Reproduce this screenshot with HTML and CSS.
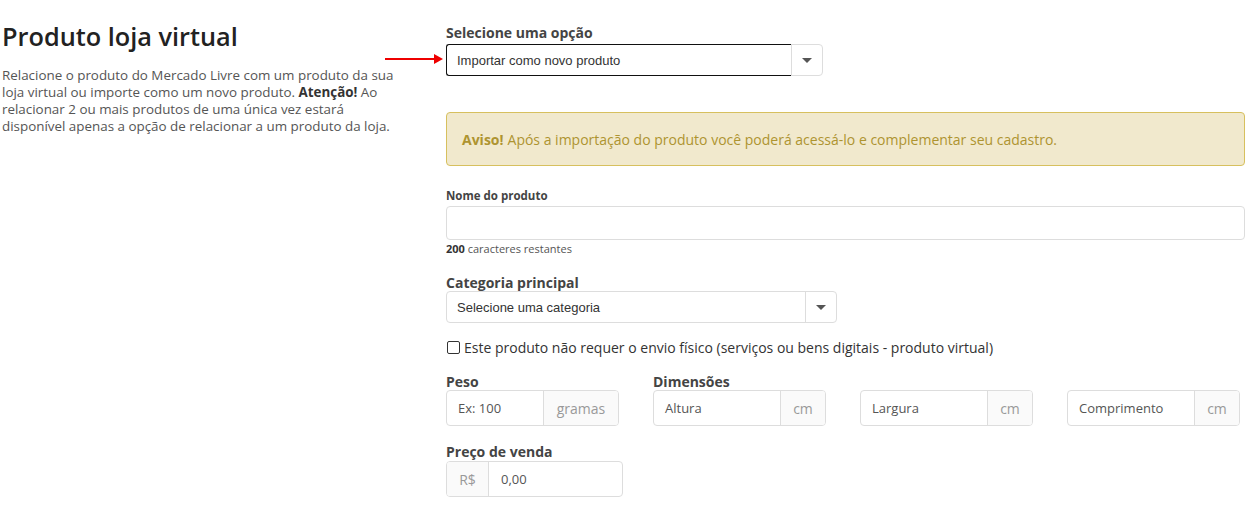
FILE: index.html
```html
<!DOCTYPE html>
<html lang="pt-BR">
<head>
  <meta charset="UTF-8" />
  <title>Produto loja virtual</title>
  <link rel="stylesheet" href="styles.css">
</head>
<body>
  <div class="page">
    <div class="intro">
      <h1>Produto loja virtual</h1>
      <p>Relacione o produto do Mercado Livre com um produto da sua loja virtual ou importe como um novo produto. <b>Atenção!</b> Ao relacionar 2 ou mais produtos de uma única vez estará disponível apenas a opção de relacionar a um produto da loja.</p>
    </div>

    <div class="form">
      <div class="field">
        <label class="lbl">Selecione uma opção</label>
        <div class="select select-main focused">
          <span class="arrow-pointer"></span>
          <div class="select-value">Importar como novo produto</div>
          <div class="select-btn"><span class="caret"></span></div>
        </div>
      </div>

      <div class="alert"><b>Aviso!</b> Após a importação do produto você poderá acessá-lo e complementar seu cadastro.</div>

      <div class="field">
        <label class="lbl small">Nome do produto</label>
        <div class="input full"></div>
        <div class="help"><b>200</b> caracteres restantes</div>
      </div>

      <div class="field cat">
        <label class="lbl">Categoria principal</label>
        <div class="select select-cat">
          <div class="select-value">Selecione uma categoria</div>
          <div class="select-btn"><span class="caret"></span></div>
        </div>
      </div>

      <label class="check"><span class="box"></span>Este produto não requer o envio físico (serviços ou bens digitais - produto virtual)</label>

      <div class="dims">
        <div class="col">
          <label class="lbl">Peso</label>
          <div class="group"><span class="ph">Ex: 100</span><span class="addon">gramas</span></div>
        </div>
        <div class="col">
          <label class="lbl">Dimensões</label>
          <div class="group"><span class="ph">Altura</span><span class="addon">cm</span></div>
        </div>
        <div class="col">
          <label class="lbl">&nbsp;</label>
          <div class="group"><span class="ph">Largura</span><span class="addon">cm</span></div>
        </div>
        <div class="col">
          <label class="lbl">&nbsp;</label>
          <div class="group"><span class="ph">Comprimento</span><span class="addon">cm</span></div>
        </div>
      </div>

      <div class="field price">
        <label class="lbl">Preço de venda</label>
        <div class="group price-group"><span class="addon left">R$</span><span class="ph">0,00</span></div>
      </div>
    </div>
  </div>
</body>
</html>
```

FILE: styles.css
```css
body {
  margin: 0;
  font-family: "Open Sans", Arial, sans-serif;
  color: #333;
  background: #fff;
}
.page {
  display: grid;
  grid-template-columns: 444px 799px;
  padding-left: 2px;
}
.intro h1 {
  margin: 19px 0 0;
  font-size: 25.3px;
  font-weight: 600;
  line-height: 34px;
  color: #222;
}
.intro p {
  margin: 14px 0 0;
  font-size: 13.4px;
  line-height: 17px;
  color: #555;
  width: 400px;
}
.intro p b {
  color: #333;
}
.form {
  padding-top: 23px;
}
.lbl {
  display: block;
  font-size: 14px;
  font-weight: 700;
  color: #444;
  line-height: 19px;
  margin-bottom: 2px;
}
.lbl.small {
  font-size: 11.5px;
  margin-bottom: 1px;
}
.select {
  position: relative;
  display: flex;
  height: 32px;
  border: 1px solid #ddd;
  border-radius: 4px;
  box-sizing: border-box;
  font-family: "Liberation Sans", Arial, sans-serif;
  font-size: 13px;
  color: #333;
}
.select-main { width: 377px; }
.select-cat { width: 391px; }
.select-value {
  flex: 1;
  display: flex;
  align-items: center;
  padding-left: 10px;
}
.focused .select-value {
  border: 1px solid #111;
  border-right: none;
  margin: -1px 0 -1px -1px;
  border-radius: 3px 0 0 3px;
}
.select-btn {
  width: 30px;
  border-left: 1px solid #ddd;
  display: flex;
  align-items: center;
  justify-content: center;
}
.caret {
  width: 0;
  height: 0;
  border-left: 5px solid transparent;
  border-right: 5px solid transparent;
  border-top: 5px solid #555;
}
.arrow-pointer {
  position: absolute;
  left: -62px;
  top: 13px;
  width: 50px;
  height: 2px;
  background: #e00;
}
.arrow-pointer::after {
  content: "";
  position: absolute;
  right: -8px;
  top: -4px;
  border-left: 9px solid #e00;
  border-top: 5px solid transparent;
  border-bottom: 5px solid transparent;
}
.alert {
  margin-top: 36px;
  height: 54px;
  box-sizing: border-box;
  display: flex;
  align-items: center;
  padding-left: 15px;
  background: #f1e9cd;
  border: 1px solid #d7c05e;
  border-radius: 4px;
  color: #ae9430;
  font-size: 14px;
}
.alert b {
  margin-right: 4px;
}
.alert + .field {
  margin-top: 20px;
}
.input {
  height: 34px;
  border: 1px solid #ddd;
  border-radius: 4px;
  box-sizing: border-box;
}
.input.full { width: 799px; }
.help {
  font-size: 11px;
  color: #555;
  margin-top: 1px;
}
.help b { color: #333; }
.cat {
  margin-top: 17px;
}
.cat .lbl {
  margin-bottom: -1px;
}
.check {
  display: flex;
  align-items: center;
  margin-top: 15px;
  font-size: 14px;
  color: #333;
  line-height: 19px;
}
.box {
  width: 11px;
  height: 11px;
  border: 1px solid #333;
  border-radius: 2px;
  margin: 0 4px 0 1px;
}
.dims {
  display: grid;
  grid-template-columns: repeat(4, 173px);
  column-gap: 34px;
  margin-top: 15px;
}
.dims .lbl {
  margin-bottom: -1px;
}
.group {
  display: flex;
  height: 36px;
  border: 1px solid #ddd;
  border-radius: 4px;
  box-sizing: border-box;
  font-size: 13px;
  color: #555;
}
.ph {
  flex: 1;
  display: flex;
  align-items: center;
  padding-left: 11px;
}
.addon {
  display: flex;
  align-items: center;
  justify-content: center;
  padding: 0 12px;
  background: #fafafa;
  border-left: 1px solid #ddd;
  color: #999;
  font-size: 14px;
}
.addon.left {
  border-left: none;
  border-right: 1px solid #ddd;
  width: 41px;
  padding: 0;
  border-radius: 3px 0 0 3px;
}
.addon:last-child {
  border-radius: 0 3px 3px 0;
}
.col:first-child .addon { width: 50px; padding: 0 12px; }
.col .addon { width: 20px; }
.price {
  margin-top: 16px;
}
.price .lbl {
  margin-bottom: 0;
}
.price-group {
  width: 177px;
}
.price-group .ph { padding-left: 12px; }
```
